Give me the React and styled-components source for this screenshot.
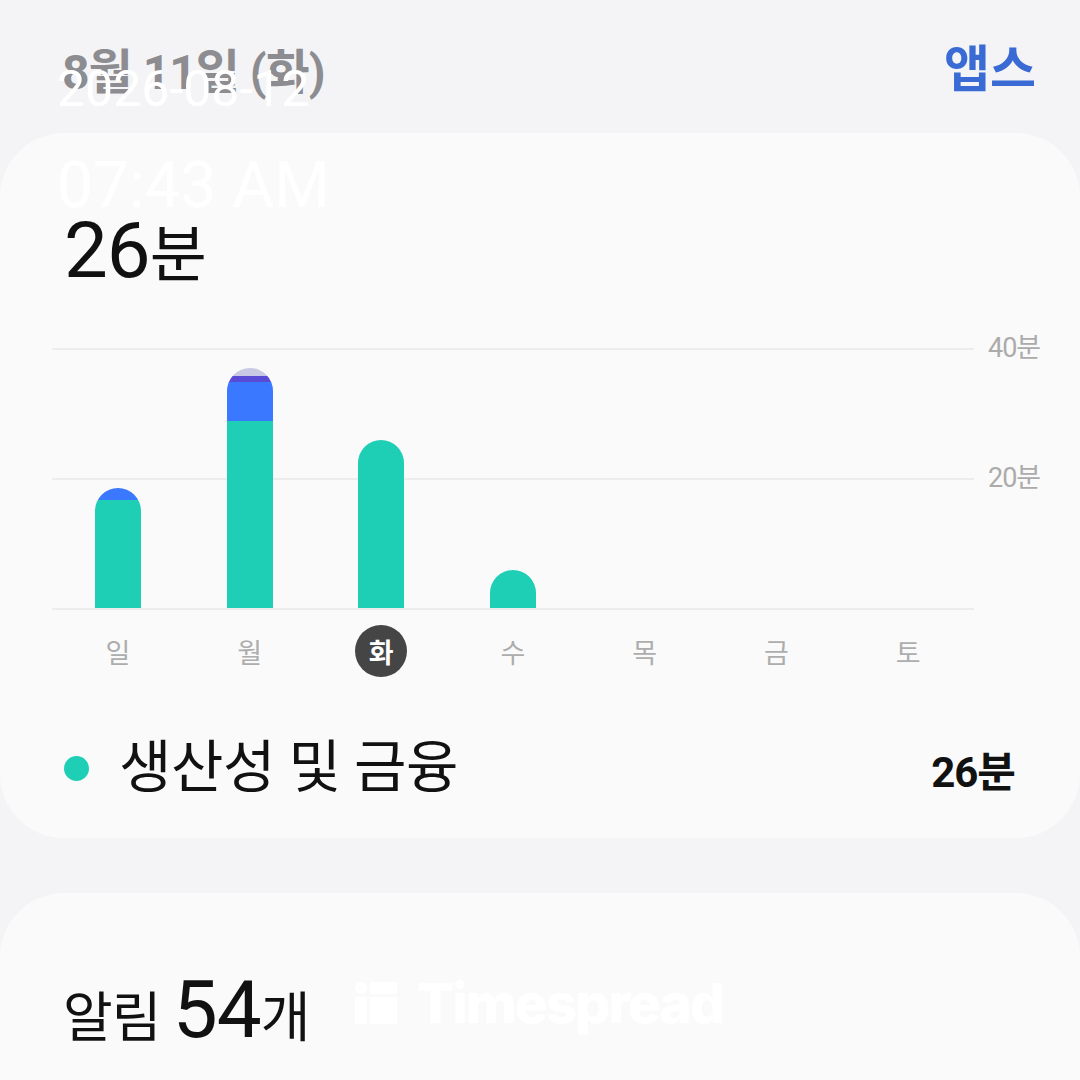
import React from "react";
import styled, { createGlobalStyle } from "styled-components";

const GlobalStyle = createGlobalStyle`
    html, body {
        margin: 0;
        padding: 0;
        background-color: #F4F4F6;
        font-family: Roboto, "Noto Sans CJK KR", sans-serif;
    }
`;

const Page = styled.div`
    position: relative;
    width: 1080px;
    height: 1080px;
    overflow: hidden;
    background-color: #F4F4F6;
`;

const Header = styled.header`
    height: 133px;
    box-sizing: border-box;
    padding: 12px 44px 0 62px;
    display: flex;
    align-items: center;
    justify-content: space-between;
`;

const DateTitle = styled.h1`
    margin: 0;
    font-size: 48px;
    font-weight: 700;
    line-height: 1;
    color: #8C8C91;
    letter-spacing: -1px;
`;

const AppsLink = styled.a`
    font-size: 50px;
    font-weight: 700;
    line-height: 1;
    color: #3A6BD4;
    text-decoration: none;
    margin-top: -6px;
`;

const Card = styled.section`
    background-color: #FAFAFA;
    border-radius: 64px 64px ${props => props.$open ? "0 0" : "64px 64px"};
    height: ${props => props.$height}px;
    box-sizing: border-box;
    padding-top: ${props => props.$padTop}px;
    margin-bottom: ${props => props.$gap || 0}px;
`;

const Total = styled.div`
    margin-left: 64px;
    font-size: 78px;
    line-height: 78px;
    color: #111111;
    letter-spacing: -1px;

    span {
        font-size: 62px;
    }
`;

const Chart = styled.div`
    display: flex;
    margin: 53px 0 0 52px;
`;

const Plot = styled.div`
    width: 922px;
    height: 262px;
    box-sizing: border-box;
    border-top: 2px solid #EDEDED;
    border-bottom: 2px solid #EDEDED;
    background: linear-gradient(#EDEDED, #EDEDED) 0 128px / 100% 2px no-repeat;
    display: grid;
    grid-template-columns: repeat(7, 1fr);
    align-items: end;
    justify-items: center;
`;

const Bar = styled.div`
    width: 46px;
    border-radius: 23px 23px 0 0;
    overflow: hidden;
    display: flex;
    flex-direction: column;
`;

const Segment = styled.div`
    background-color: ${props => props.$color};
`;

const Axis = styled.div`
    margin: -15px 0 0 14px;
    display: flex;
    flex-direction: column;
`;

const AxisLabel = styled.div`
    height: 130px;
    line-height: 30px;
    font-size: 27px;
    color: #ABABAB;
    letter-spacing: -1px;
`;

const Days = styled.div`
    width: 922px;
    margin: 15px 0 0 52px;
    display: grid;
    grid-template-columns: repeat(7, 1fr);
    justify-items: center;
`;

const Day = styled.div`
    width: 52px;
    height: 52px;
    border-radius: 50%;
    display: flex;
    align-items: center;
    justify-content: center;
    font-size: 27px;
    color: ${props => props.$active ? "#FFFFFF" : "#ADADAD"};
    background-color: ${props => props.$active ? "#454545" : "transparent"};
    font-weight: ${props => props.$active ? 700 : 400};
`;

const LegendRow = styled.div`
    margin: 58px 65px 0 64px;
    display: flex;
    align-items: center;
`;

const Dot = styled.span`
    width: 25px;
    height: 25px;
    border-radius: 50%;
    background-color: ${props => props.$color};
    margin-right: 30px;
`;

const LegendName = styled.span`
    flex: 1;
    font-size: 57px;
    line-height: 66px;
    font-weight: 400;
    color: #111111;
    letter-spacing: -0.5px;
`;

const LegendValue = styled.span`
    font-size: 42px;
    font-weight: 700;
    color: #111111;
    letter-spacing: -1px;
`;

const Count = styled.div`
    margin-left: 63px;
    font-size: 80px;
    line-height: 78px;
    color: #111111;
    letter-spacing: -1px;

    span {
        font-size: 54px;
    }
`;

const Stamp = styled.div`
    position: absolute;
    left: 57px;
    top: ${props => props.$top}px;
    font-size: ${props => props.$size}px;
    line-height: 1;
    color: #FFFFFF;
    font-family: Roboto, sans-serif;
`;

const Watermark = styled.div`
    position: absolute;
    left: 355px;
    top: 970px;
    display: flex;
    align-items: center;
    gap: 20px;
    color: #FFFFFF;
    font-family: Inter, sans-serif;
    font-size: 55px;
    font-weight: 800;
    letter-spacing: -2px;
`;

const days = ["일", "월", "화", "수", "목", "금", "토"];

const bars = [
    [["#3A78FF", 12], ["#1FCFB5", 108]],
    [["#C9C9E6", 8], ["#5A4BD6", 6], ["#3A78FF", 39], ["#1FCFB5", 187]],
    [["#1FCFB5", 168]],
    [["#1FCFB5", 38]],
    [],
    [],
    [],
];

function TimespreadIcon() {
    return (
        <svg width="42" height="42" viewBox="0 0 42 42">
            <circle cx="6" cy="6" r="6" fill="#FFFFFF" />
            <rect x="0" y="15" width="12" height="27" fill="#FFFFFF" />
            <rect x="15" y="0" width="27" height="12" fill="#FFFFFF" />
            <rect x="15" y="15" width="27" height="27" fill="#FFFFFF" />
        </svg>
    );
}

function App() {
    return (
        <Page>
            <GlobalStyle />
            <Header>
                <DateTitle>8월 11일 (화)</DateTitle>
                <AppsLink href="#">앱스</AppsLink>
            </Header>

            <Card $height={705} $padTop={79} $gap={55}>
                <Total>26<span>분</span></Total>

                <Chart>
                    <Plot>
                        {bars.map((segments, index) => (
                            <Bar key={index}>
                                {segments.map(([color, h], i) => (
                                    <Segment key={i} $color={color} style={{ height: h }} />
                                ))}
                            </Bar>
                        ))}
                    </Plot>
                    <Axis>
                        <AxisLabel>40분</AxisLabel>
                        <AxisLabel>20분</AxisLabel>
                    </Axis>
                </Chart>

                <Days>
                    {days.map((day, index) => (
                        <Day key={day} $active={index === 2}>{day}</Day>
                    ))}
                </Days>

                <LegendRow>
                    <Dot $color="#1FCFB5" />
                    <LegendName>생산성 및 금융</LegendName>
                    <LegendValue>26분</LegendValue>
                </LegendRow>
            </Card>

            <Card $height={200} $padTop={78} $open>
                <Count><span>알림 </span>54<span>개</span></Count>
            </Card>

            <Stamp $top={64} $size={50}>2026-08-12</Stamp>
            <Stamp $top={154} $size={64}>07:43 AM</Stamp>

            <Watermark>
                <TimespreadIcon />
                Timespread
            </Watermark>
        </Page>
    );
}

export default App;
